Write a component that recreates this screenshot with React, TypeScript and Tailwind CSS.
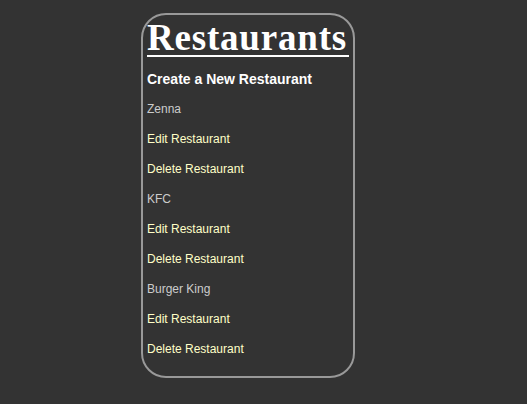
const restaurants = ["Zenna", "KFC", "Burger King"]

export default function App() {
  return (
    <div className="min-h-screen bg-[#333333] pt-[13px] pl-[141px] font-['Liberation_Sans',Arial,sans-serif]">
      <div className="w-[214px] rounded-[25px] border-2 border-[#999999] px-[4px] pb-[12px]">
        <h1 className="h-[42px] border-b-2 border-white pt-[6px] font-['Liberation_Serif',Georgia,serif] text-[37px] leading-[34px] font-bold tracking-[0.8px] text-white">
          Restaurants
        </h1>
        <div className="mt-[7px] flex h-[30px] items-center text-[14px] font-bold text-white">
          Create a New Restaurant
        </div>
        {restaurants.map((name) => (
          <div key={name} className="text-[12px]">
            <div className="flex h-[30px] items-center text-[#cccccc]">{name}</div>
            <div className="flex h-[30px] items-center text-[#ffffc8]">Edit Restaurant</div>
            <div className="flex h-[30px] items-center text-[#ffffc8]">Delete Restaurant</div>
          </div>
        ))}
      </div>
    </div>
  )
}
